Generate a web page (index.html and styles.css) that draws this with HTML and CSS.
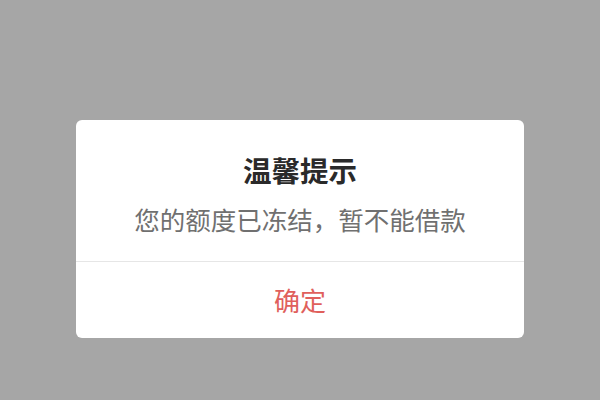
FILE: index.html
```html
<!DOCTYPE html>
<html lang="zh-CN">
<head>
<meta charset="utf-8">
<link rel="stylesheet" href="styles.css">
</head>
<body>
<div class="dialog">
  <div class="dialog-body">
    <div class="dialog-title">温馨提示</div>
    <div class="dialog-message">您的额度已冻结，暂不能借款</div>
  </div>
  <div class="dialog-action">确定</div>
</div>
</body>
</html>
```

FILE: styles.css
```css
html, body {
  margin: 0;
  padding: 0;
}
body {
  width: 600px;
  height: 400px;
  background: #a6a6a6;
  font-family: "Noto Sans CJK SC", "Noto Sans", sans-serif;
  overflow: hidden;
}
.dialog {
  width: 448px;
  margin: 120px auto 0;
  background: #ffffff;
  border-radius: 6px;
  overflow: hidden;
}
.dialog-body {
  padding: 32px 16px 25px;
  text-align: center;
  border-bottom: 1px solid #e6e6e6;
}
.dialog-title {
  font-size: 28.5px;
  line-height: 36px;
  font-weight: bold;
  color: #2a2a2a;
}
.dialog-message {
  margin-top: 14px;
  font-size: 25.5px;
  line-height: 34px;
  color: #707070;
}
.dialog-action {
  height: 76px;
  line-height: 76px;
  text-align: center;
  font-size: 26px;
  color: #e0605c;
}
```
